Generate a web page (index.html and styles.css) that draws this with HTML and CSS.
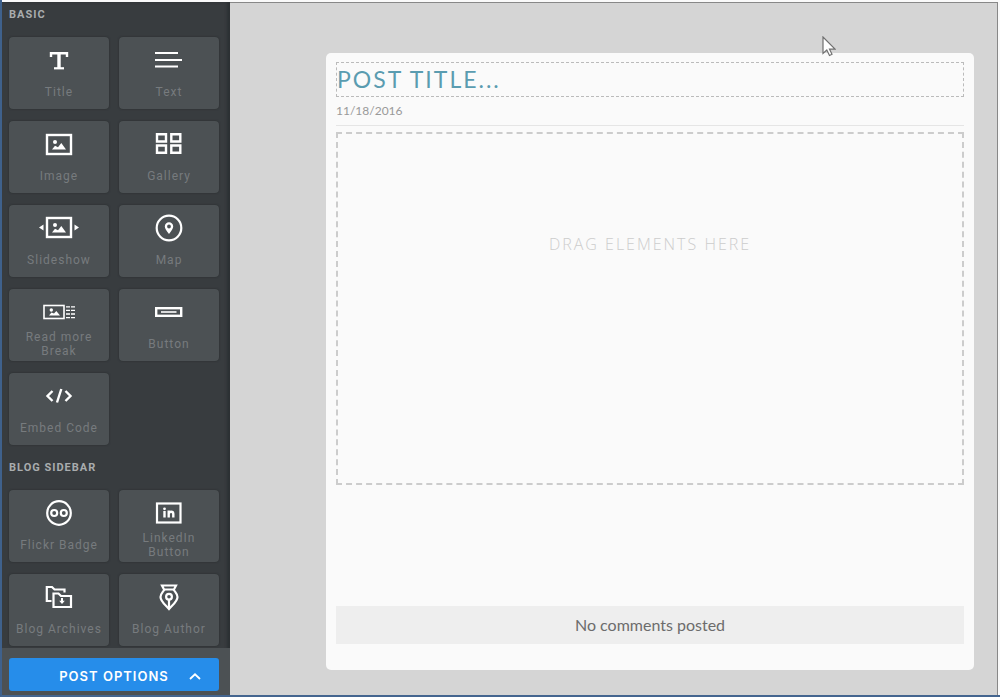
FILE: index.html
```html
<!DOCTYPE html>
<html lang="en">
<head>
    <meta charset="UTF-8">
    <meta name="viewport" content="width=device-width, initial-scale=1.0">
    <title>Post Editor</title>
    <link rel="stylesheet" href="styles.css">
</head>
<body>

<div class="editor">
    <aside class="sidebar">
        <div class="elements">
            <h2>BASIC</h2>
            <div class="tiles">
                <button type="button" class="tile">
                    <svg width="40" height="30" viewBox="0 0 40 30" fill="none" stroke="#fff">
                        <path d="M12 11V7.2H28V11" stroke-width="2.4"/>
                        <path d="M20 7V22" stroke-width="3.4"/>
                        <path d="M15 22.3H25" stroke-width="2.2"/>
                    </svg>
                    <span>Title</span>
                </button>
                <button type="button" class="tile">
                    <svg width="40" height="30" viewBox="0 0 40 30" fill="none" stroke="#fff" stroke-width="2">
                        <path d="M6 7H29M6 14H33M6 20.5H29"/>
                    </svg>
                    <span>Text</span>
                </button>
                <button type="button" class="tile">
                    <svg width="40" height="30" viewBox="0 0 40 30">
                        <rect x="8" y="5" width="24" height="19" fill="none" stroke="#fff" stroke-width="2.4"/>
                        <circle cx="16" cy="12" r="2" fill="#fff"/>
                        <path d="M13 19.5L16 15.8L19 17.3L22.3 13L27 19.5Z" fill="#fff"/>
                    </svg>
                    <span>Image</span>
                </button>
                <button type="button" class="tile">
                    <svg width="40" height="30" viewBox="0 0 40 30" fill="none" stroke="#fff" stroke-width="2.4">
                        <path d="M8 4.2H17V11.5H8ZM22.3 4.2H31.3V11.5H22.3ZM8 15.5H17V22.8H8ZM22.3 15.5H31.3V22.8H22.3Z"/>
                    </svg>
                    <span>Gallery</span>
                </button>
                <button type="button" class="tile">
                    <svg width="40" height="30" viewBox="0 0 40 30">
                        <rect x="8" y="4" width="24" height="19" fill="none" stroke="#fff" stroke-width="2.4"/>
                        <circle cx="16" cy="11" r="2" fill="#fff"/>
                        <path d="M13 18.5L16 14.8L19 16.3L22.3 12L27 18.5Z" fill="#fff"/>
                        <path d="M4.5 10.5V16.5L0 13.5ZM35.5 10.5V16.5L40 13.5Z" fill="#fff"/>
                    </svg>
                    <span>Slideshow</span>
                </button>
                <button type="button" class="tile">
                    <svg width="40" height="30" viewBox="0 0 40 30">
                        <circle cx="20" cy="14" r="12.3" fill="none" stroke="#fff" stroke-width="2.2"/>
                        <path d="M20 20C17.5 16.5 15.8 14.5 15.8 12.5A4.2 4.2 0 0 1 24.2 12.5C24.2 14.5 22.5 16.5 20 20ZM20 10.6A1.9 1.9 0 1 0 20 14.4A1.9 1.9 0 1 0 20 10.6Z" fill="#fff" fill-rule="evenodd"/>
                    </svg>
                    <span>Map</span>
                </button>
                <button type="button" class="tile">
                    <svg width="40" height="30" viewBox="0 0 40 30">
                        <rect x="5" y="7.5" width="20" height="13" fill="none" stroke="#fff" stroke-width="1.6"/>
                        <circle cx="12.3" cy="12" r="1.7" fill="#fff"/>
                        <path d="M10 17.5L12.5 14.5L15 15.5L17.3 13L21 17.5Z" fill="#fff"/>
                        <path d="M27 8.8H36M27 12.4H36M27 16H36M27 19.6H36" stroke="#fff" stroke-width="1.3" stroke-dasharray="4 1"/>
                    </svg>
                    <span>Read more<br>Break</span>
                </button>
                <button type="button" class="tile">
                    <svg width="40" height="30" viewBox="0 0 40 30" fill="none" stroke="#fff">
                        <rect x="7.2" y="10.2" width="25" height="7.6" stroke-width="2.4"/>
                        <path d="M12 14H27.5" stroke-width="1.6"/>
                    </svg>
                    <span>Button</span>
                </button>
                <button type="button" class="tile">
                    <svg width="40" height="30" viewBox="0 0 40 30" fill="none" stroke="#fff" stroke-width="2.4">
                        <path d="M13.5 9L8.5 14L13.5 19M26.5 9L31.5 14L26.5 19M22.3 7L18 20.5"/>
                    </svg>
                    <span>Embed Code</span>
                </button>
            </div>

            <h2>BLOG SIDEBAR</h2>
            <div class="tiles">
                <button type="button" class="tile">
                    <svg width="40" height="30" viewBox="0 0 40 30" fill="none" stroke="#fff" stroke-width="2.2">
                        <circle cx="20" cy="14" r="11.8"/>
                        <circle cx="15.2" cy="14" r="3"/>
                        <circle cx="24.8" cy="14" r="3"/>
                    </svg>
                    <span>Flickr Badge</span>
                </button>
                <button type="button" class="tile">
                    <svg width="40" height="30" viewBox="0 0 40 30">
                        <rect x="8" y="4.5" width="23.5" height="19" fill="none" stroke="#fff" stroke-width="2.2"/>
                        <path d="M15.5 12V18.5M19.7 18.5V11.5M19.7 15C20 12 24.3 12 24.3 15V18.5" fill="none" stroke="#fff" stroke-width="2.4"/>
                        <circle cx="15.5" cy="9.8" r="1.4" fill="#fff"/>
                    </svg>
                    <span>LinkedIn<br>Button</span>
                </button>
                <button type="button" class="tile">
                    <svg width="40" height="30" viewBox="0 0 40 30" fill="none" stroke="#fff" stroke-width="2.2">
                        <path d="M12.5 18H7.8V4H13L15.5 6.5H25.5V9.5"/>
                        <path d="M14.5 24V10.5H19.5L22 13H32V24Z"/>
                        <path d="M23 15V19" stroke-width="2"/>
                        <path d="M20.2 17.8H25.8L23 21Z" fill="#fff" stroke="none"/>
                    </svg>
                    <span>Blog Archives</span>
                </button>
                <button type="button" class="tile">
                    <svg width="40" height="30" viewBox="0 0 40 30" fill="none" stroke="#fff" stroke-width="2.2">
                        <path d="M13 2.5H27L25 6.5H15Z"/>
                        <path d="M15.5 6.5C13.5 9.5 11.5 11 11.5 14C11.5 18.5 16.5 22 20 26C23.5 22 28.5 18.5 28.5 14C28.5 11 26.5 9.5 24.5 6.5"/>
                        <circle cx="20" cy="13.8" r="2.9"/>
                        <path d="M20 17V26"/>
                    </svg>
                    <span>Blog Author</span>
                </button>
            </div>
        </div>

        <div class="options">
            <button type="button" class="options-btn">
                <span>POST OPTIONS</span>
                <svg width="12" height="8" viewBox="0 0 12 8" fill="none" stroke="#fff" stroke-width="1.8">
                    <path d="M1 7L6 2.3L11 7"/>
                </svg>
            </button>
        </div>
    </aside>

    <main class="canvas">
        <article class="post">
            <h1 class="post-title">POST TITLE...</h1>
            <p class="post-date">11/18/2016</p>
            <div class="dropzone">DRAG ELEMENTS HERE</div>
            <p class="comments">No comments posted</p>
        </article>
    </main>
</div>

<!-- mouse pointer -->
<svg class="pointer" width="14" height="21" viewBox="0 0 14 21">
    <path d="M1 1V17.5L4.8 14L7.5 19.5L10 18.3L7.5 13.2H13Z" fill="#fff" stroke="#707070" stroke-width="1.2"/>
</svg>

</body>
</html>
```
FILE: styles.css
```css
* {
    box-sizing: border-box;
}
body {
    margin: 0;
    background-color: #fafafa;
    font-family: "Open Sans", sans-serif;
}
h1, h2, p {
    margin: 0;
    font-weight: normal;
}
button {
    font-family: inherit;
    border: none;
    cursor: pointer;
}
.editor {
    display: flex;
    height: 100vh;
    padding: 2px 2px 0 0;
    border-left: 2px solid #3f618c;
    border-bottom: 2px solid #44658f;
}
.sidebar {
    display: flex;
    flex-direction: column;
    flex: 0 0 228px;
    background-color: #383c3f;
    box-shadow: inset -3px 0 3px #2c3033;
}
.elements {
    flex: 1;
    min-height: 0;
    padding: 0 11px 0 7px;
    overflow: hidden;
}
.elements h2 {
    height: 35px;
    padding-top: 6px;
    font-family: Roboto, sans-serif;
    font-size: 11px;
    font-weight: 700;
    line-height: 14px;
    letter-spacing: 1px;
    color: #a9acae;
}
.tiles {
    display: grid;
    grid-template-columns: 1fr 1fr;
    gap: 12px 10px;
    margin-bottom: 10px;
}
.tile {
    display: flex;
    flex-direction: column;
    align-items: center;
    height: 72px;
    padding: 9px 0 0;
    border-radius: 4px;
    background-color: #4c5154;
    box-shadow: 0 0 2px #26292b;
    color: #777b7e;
    font-family: Roboto, sans-serif;
    font-size: 12px;
    line-height: 14px;
    letter-spacing: 1px;
}
.tile svg {
    flex: none;
}
.tile span {
    display: flex;
    flex-direction: column;
    justify-content: center;
    min-height: 32px;
    white-space: nowrap;
}
.options {
    padding: 10px 11px 4px 7px;
    background-color: #4c5154;
}
.options-btn {
    display: flex;
    align-items: center;
    justify-content: center;
    gap: 20px;
    width: 100%;
    height: 33px;
    padding: 2px 0 0 32px;
    border-radius: 3px;
    background-color: #268dea;
    color: white;
    font-family: Inter, sans-serif;
    font-size: 13px;
    font-weight: 600;
    letter-spacing: 1px;
}
.canvas {
    flex: 1;
    padding: 50px 23px 25px 96px;
    border-top: 1px solid #888;
    border-right: 1px solid #888;
    background-color: #d5d5d5;
}
.post {
    padding: 9px 10px 26px;
    border-radius: 5px;
    background-color: #fafafa;
}
.post-title {
    height: 35px;
    border: 1px dashed #bbb;
    font-family: Lato, sans-serif;
    font-size: 23px;
    line-height: 32px;
    letter-spacing: 2px;
    color: #5a9cb0;
}
.post-date {
    height: 29px;
    margin-bottom: 6px;
    border-bottom: 1px solid #e5e5e5;
    font-family: Lato, sans-serif;
    font-size: 12px;
    line-height: 28px;
    color: #999;
}
.dropzone {
    height: 353px;
    padding-top: 99px;
    border: 2px dashed #ccc;
    font-size: 16px;
    font-weight: 300;
    line-height: 22px;
    letter-spacing: 2px;
    text-align: center;
    color: #ccc;
}
.comments {
    margin-top: 121px;
    background-color: #eee;
    font-family: Lato, sans-serif;
    font-size: 16px;
    line-height: 38px;
    text-align: center;
    color: #6c6c6c;
}
.pointer {
    position: absolute;
    left: 822px;
    top: 36px;
}
```
